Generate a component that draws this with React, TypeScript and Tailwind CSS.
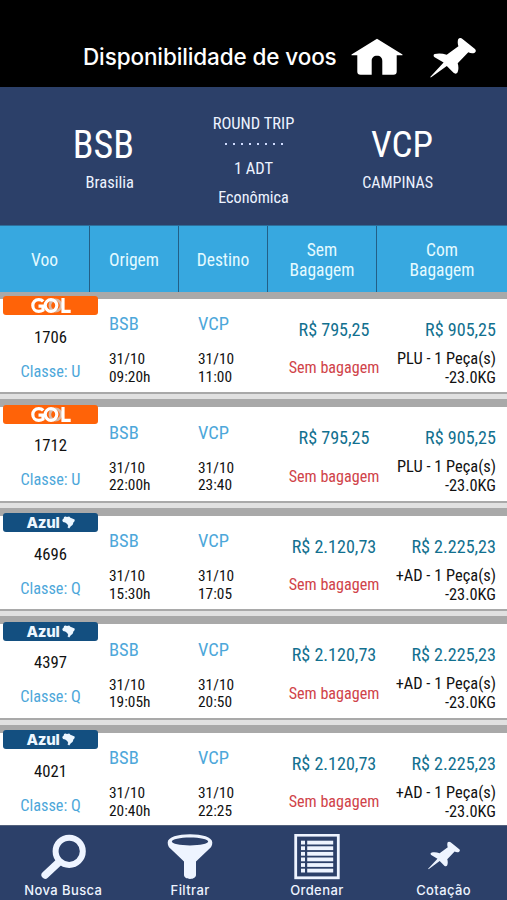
import type { ReactNode } from 'react';

interface Flight {
  airline: 'gol' | 'azul';
  number: string;
  fareClass: string;
  departure: string;
  arrival: string;
  price: string;
  bagPrice: string;
  baggage: string;
}

const flights: Flight[] = [
  { airline: 'gol', number: '1706', fareClass: 'U', departure: '09:20h', arrival: '11:00', price: 'R$ 795,25', bagPrice: 'R$ 905,25', baggage: 'PLU - 1 Peça(s)' },
  { airline: 'gol', number: '1712', fareClass: 'U', departure: '22:00h', arrival: '23:40', price: 'R$ 795,25', bagPrice: 'R$ 905,25', baggage: 'PLU - 1 Peça(s)' },
  { airline: 'azul', number: '4696', fareClass: 'Q', departure: '15:30h', arrival: '17:05', price: 'R$ 2.120,73', bagPrice: 'R$ 2.225,23', baggage: '+AD - 1 Peça(s)' },
  { airline: 'azul', number: '4397', fareClass: 'Q', departure: '19:05h', arrival: '20:50', price: 'R$ 2.120,73', bagPrice: 'R$ 2.225,23', baggage: '+AD - 1 Peça(s)' },
  { airline: 'azul', number: '4021', fareClass: 'Q', departure: '20:40h', arrival: '22:25', price: 'R$ 2.120,73', bagPrice: 'R$ 2.225,23', baggage: '+AD - 1 Peça(s)' },
];

const PinIcon = ({ className }: { className: string }) => (
  <svg viewBox="0 0 46 40" className={className} fill="currentColor">
    <path d="M28.300 1C29.300-.3 31.300-.2 32.500 1L45 11c1.300 1.300 1 3.300-.7 4-2 .6-4.200.2-6-.7L27.700 25.300c.9 3 1 6 0 8.700-.8 1.900-2.800 2.100-4.200.8L16.800 28 .8 39.600.2 39 13.600 24.600 4.600 19.200C3.200 18 3.300 16.600 4.700 16c3.800-.9 8-.6 12 .8L28.400 8.300c-.8-2.400-1-5-.1-7.300Z" />
  </svg>
);

const HomeIcon = () => (
  <svg viewBox="0 0 52 38" className="h-[38px] w-[52px]" fill="currentColor">
    <path d="M26 .8 51.500 16.500v.7h-5.800V33.500c0 2.300-1 3.300-3.300 3.300H31.300V23c0-3.200-1.900-5.200-5.300-5.200s-5.300 2-5.300 5.200v13.800H9.600c-2.300 0-3.300-1-3.300-3.300V17.200H.5v-.7Z" />
  </svg>
);

const SearchIcon = () => (
  <svg viewBox="0 0 46 46" className="size-[46px]" fill="none" stroke="currentColor">
    <circle cx="29.200" cy="17.300" r="13.600" strokeWidth="6" />
    <path d="M18.800 28.200 5.200 41" strokeWidth="7.500" strokeLinecap="round" />
  </svg>
);

const FilterIcon = () => (
  <svg viewBox="0 0 46 46" className="size-[46px]" fill="currentColor">
    <path
      fillRule="evenodd"
      d="M23 .3c12 0 22.300 2.800 22.300 8.200 0 3-1 4.600-3.200 6.600L29 27.500V41c0 2.400-2.600 3.900-6 3.900s-6-1.500-6-3.900V27.500L3.900 15.100C1.700 13.100.7 11.500.7 8.500.7 3.100 11 .3 23 .3Zm0 3.200C13 3.500 4.800 5.300 4.800 7.600S13 11.500 23 11.500s18.200-1.600 18.200-3.900S33 3.500 23 3.500Z"
    />
  </svg>
);

const ListIcon = () => (
  <svg viewBox="0 0 46 46" className="size-[46px]">
    <rect x="1.700" y="1.200" width="42.600" height="42.600" fill="none" stroke="currentColor" strokeWidth="2.800" />
    {[6.700, 12.300, 17.900, 23.500, 29.100, 34.700].map((y) => (
      <g key={y} fill="currentColor">
        <rect x="7" y={y} width="4" height="3.800" />
        <rect x="13.200" y={y} width="26" height="3.800" />
      </g>
    ))}
  </svg>
);

const AirlineBadge = ({ airline }: { airline: Flight['airline'] }) => {
  if (airline === 'gol') {
    return (
      <div className="flex h-[19px] w-[95px] items-center justify-center rounded-[3px] bg-[#ff6308]">
        <svg viewBox="0 0 42 17" className="h-[17px] w-[42px]" fill="none" strokeWidth="3.200">
          <path d="M13.200 4.400C12 3 10.600 2.600 8.800 2.600 5 2.600 2.800 5.200 2.800 8.500s2.200 5.900 6 5.900c1.700 0 3-.4 4.200-1.200V9.200H8.500" stroke="#fff" />
          <circle cx="25.500" cy="8.500" r="5.600" stroke="#d9b8a4" strokeWidth="2.600" />
          <circle cx="21" cy="8.500" r="5.800" stroke="#fff" />
          <path d="M33 1v13.300h7.700" stroke="#fff" />
        </svg>
      </div>
    );
  }
  return (
    <div className="flex h-[19px] w-[95px] items-center justify-center gap-[2px] rounded-[3px] bg-[#134f80] text-[#edf7ff]">
      <span className="font-[Inter,sans-serif] text-[15px] leading-[19px] font-extrabold tracking-[-0.2px]">Azul</span>
      <svg viewBox="0 0 13 13" className="size-[13px]" fill="currentColor">
        <path d="M3.300.6 5 1.100 7.200.4l1.200 1.300 4.200 1.800c.4 1.300-.3 2.400-1.300 3.100-.2 1.900-.8 3-2.300 3.300L7.200 12.600 5.400 11.300 6.300 9.900 5.200 7.900 3.200 6.600 1 6 .2 3.900 1.700 2.500 2 1Z" />
      </svg>
    </div>
  );
};

const Leg = ({ airport, time }: { airport: string; time: string }) => (
  <div className="w-[89px] pt-[15.5px]">
    <p className="text-[18.5px] leading-5 text-[#4da7da]">{airport}</p>
    <p className="mt-[17px] text-[15.4px] leading-[17.5px]">31/10</p>
    <p className="text-[15.4px] leading-[17.5px]">{time}</p>
  </div>
);

const FlightRow = ({ flight }: { flight: Flight }) => (
  <article className="h-[108.6px] shrink-0 bg-[#a9a9a9] pt-[6.5px]">
    <div className="flex h-[93.5px] bg-white text-[#111]">
      <div className="-mt-[2.5px] flex w-[109px] flex-col items-center pr-[8px]">
        <AirlineBadge airline={flight.airline} />
        <p className="mt-[12.5px] text-[16.7px] leading-5">{flight.number}</p>
        <p className="mt-3.5 text-[16.3px] leading-5 text-[#4da7da]">Classe: {flight.fareClass}</p>
      </div>
      <Leg airport="BSB" time={flight.departure} />
      <Leg airport="VCP" time={flight.arrival} />
      <div className="flex w-[94px] flex-col items-center pt-[21px] whitespace-nowrap">
        <p className="text-[18.1px] leading-5 text-[#12708f]">{flight.price}</p>
        <p className="mt-[18.5px] text-[16.1px] leading-5 text-[#d04349]">Sem bagagem</p>
      </div>
      <div className="flex flex-1 flex-col items-end pt-[21px] pr-[11px] whitespace-nowrap">
        <p className="text-[18.1px] leading-5 text-[#12708f]">{flight.bagPrice}</p>
        <p className="mt-[9px] text-[16.4px] leading-[19px]">{flight.baggage}</p>
        <p className="text-[16.4px] leading-[19px]">-23.0KG</p>
      </div>
    </div>
    <div className="mt-[2px] h-[5px] bg-[#e1e1e1]" />
  </article>
);

const NavItem = ({ label, children }: { label: string; children: ReactNode }) => (
  <button className="flex flex-1 flex-col items-center pt-2">
    <span className="flex h-[46px] items-center">{children}</span>
    <span className="mt-px text-[13px] leading-[18px] font-medium tracking-[0.4px]">{label}</span>
  </button>
);

export default function App() {
  return (
    <main className="flex h-[900px] w-[507px] flex-col overflow-hidden bg-white font-['Roboto_Condensed',Roboto,sans-serif] [font-stretch:75%]">
      <header className="flex h-[87px] shrink-0 items-start bg-black pt-[38px] pl-[83px] text-white">
        <h1 className="w-[268px] font-[Inter,sans-serif] text-[22.5px] leading-[38px] font-medium tracking-[-0.12px] whitespace-nowrap">
          Disponibilidade de voos
        </h1>
        <HomeIcon />
        <PinIcon className="ml-[27px] h-10 w-[46px]" />
      </header>

      <section className="flex h-[138px] shrink-0 bg-[#2c4069] text-[#edf3ff]">
        <div className="flex w-[134px] flex-col items-end pt-[37px]">
          <p className="text-[38px] leading-[42px] text-white">BSB</p>
          <p className="mt-[7px] text-[16.5px] leading-5">Brasilia</p>
        </div>
        <div className="flex w-[239px] flex-col items-center pt-[27px]">
          <p className="text-[16.5px] leading-5">ROUND TRIP</p>
          <div className="mt-[9px] flex gap-[6px]">
            {Array.from({ length: 8 }, (_, i) => (
              <i key={i} className="size-[2px] bg-[#cfdcff]" />
            ))}
          </div>
          <p className="mt-3.5 text-[16.5px] leading-5">1 ADT</p>
          <p className="mt-[9px] text-[16.2px] leading-5">Econômica</p>
        </div>
        <div className="flex w-[60px] flex-col items-end pt-[37px]">
          <p className="text-[37px] leading-[42px] text-white">VCP</p>
          <p className="mt-[7px] text-base leading-5">CAMPINAS</p>
        </div>
      </section>

      <section className="grid h-[67px] shrink-0 grid-cols-[90px_89px_89px_109px_130px] border-t border-[#2d6f9c] bg-[#37a8e0] text-center text-[17.5px] leading-5 text-[#e4faff]">
        {['Voo', 'Origem', 'Destino', 'Sem Bagagem', 'Com Bagagem'].map((title) => (
          <div key={title} className="flex items-center justify-center border-r border-[#235f86] px-5 pt-px last:border-r-0">
            {title}
          </div>
        ))}
      </section>

      <section className="flex h-[533px] shrink-0 flex-col overflow-hidden">
        {flights.map((flight) => (
          <FlightRow key={flight.number} flight={flight} />
        ))}
      </section>

      <nav className="flex h-[75px] shrink-0 border-t border-[#53617c] bg-[#2c4069] font-[Inter,sans-serif] text-[#eef4ff]">
        <NavItem label="Nova Busca">
          <SearchIcon />
        </NavItem>
        <NavItem label="Filtrar">
          <FilterIcon />
        </NavItem>
        <NavItem label="Ordenar">
          <ListIcon />
        </NavItem>
        <NavItem label="Cotação">
          <PinIcon className="mb-1 h-[31px] w-8" />
        </NavItem>
      </nav>
    </main>
  );
}
